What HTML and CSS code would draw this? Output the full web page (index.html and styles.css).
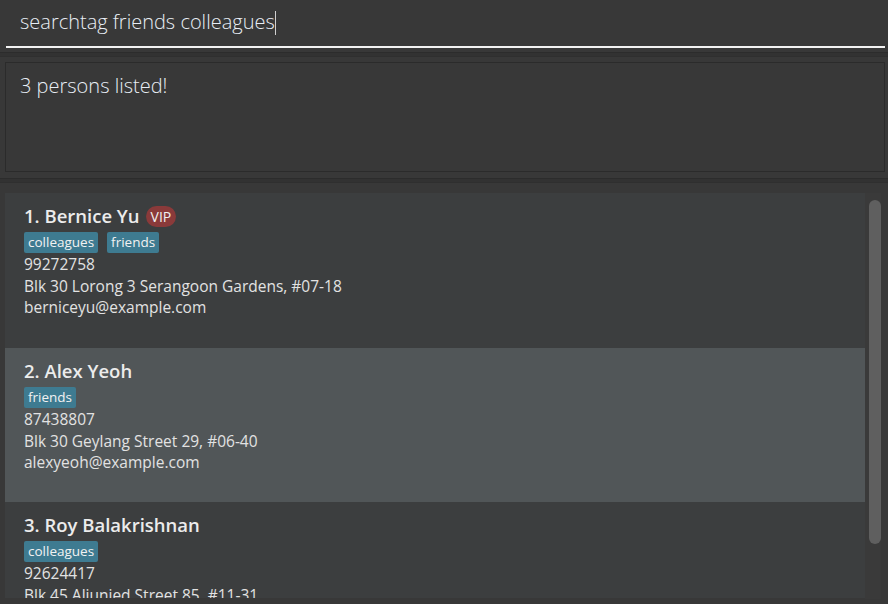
FILE: index.html
```html
<!DOCTYPE html>
<html>
<head>
<meta charset="utf-8">
<link rel="stylesheet" href="styles.css">
</head>
<body>
<div class="app">
  <div class="command-box">
    <div class="command-field"><span class="command-text">searchtag friends colleagues</span><span class="caret"></span></div>
  </div>
  <div class="divider"></div>
  <div class="result-pane">
    <div class="result-box">3 persons listed!</div>
  </div>
  <div class="divider"></div>
  <div class="list-pane">
    <div class="list">
      <div class="card">
        <div class="name">1. Bernice Yu <span class="vip">VIP</span></div>
        <div class="tags"><span class="tag">colleagues</span><span class="tag">friends</span></div>
        <div class="detail">99272758</div>
        <div class="detail">Blk 30 Lorong 3 Serangoon Gardens, #07-18</div>
        <div class="detail">berniceyu@example.com</div>
      </div>
      <div class="card odd">
        <div class="name">2. Alex Yeoh</div>
        <div class="tags"><span class="tag">friends</span></div>
        <div class="detail">87438807</div>
        <div class="detail">Blk 30 Geylang Street 29, #06-40</div>
        <div class="detail">alexyeoh@example.com</div>
      </div>
      <div class="card last">
        <div class="name">3. Roy Balakrishnan</div>
        <div class="tags"><span class="tag">colleagues</span></div>
        <div class="detail">92624417</div>
        <div class="detail">Blk 45 Aljunied Street 85, #11-31</div>
      </div>
    </div>
    <div class="scrollbar"><div class="thumb"></div></div>
  </div>
</div>
</body>
</html>
```
FILE: styles.css
```css
* { box-sizing: border-box; }
html, body { margin: 0; padding: 0; }
body {
  width: 888px;
  height: 604px;
  overflow: hidden;
  background: #383838;
  font-family: "Open Sans", "Noto Sans", sans-serif;
  color: #e6e6e6;
}
.app { display: flex; flex-direction: column; height: 604px; }
.command-box {
  height: 52px;
  padding: 0 3px 0 6px;
  background: #383838;
}
.command-field {
  height: 48px;
  border-bottom: 2px solid #f2f2f2;
  padding: 8px 0 0 14px;
  display: flex;
  align-items: flex-start;
  font-size: 20px;
  font-weight: 300;
  color: #e8eef5;
}
.command-text { line-height: 28px; }
.caret { width: 1px; height: 24px; background: #d0d0d0; margin-top: 3px; }
.divider { height: 5px; background: #323232; border-top: 1px solid #2c2c2c; border-bottom: 1px solid #2f2f2f; }
.result-pane { height: 121px; padding: 5px 3px 5px 5px; background: #383838; }
.result-box {
  height: 110px;
  border: 1px solid #2b2b2b;
  padding: 9px 14px;
  font-size: 20px;
  font-weight: 300;
  line-height: 28px;
  color: #e8eef5;
}
.list-pane {
  flex: 1;
  display: flex;
  padding: 10px 7px 0 5px;
  background: #383838;
  overflow: hidden;
}
.list { width: 860px; display: flex; flex-direction: column; }
.card {
  height: 155px;
  flex: none;
  background: #3c3e3f;
  padding: 9px 19px;
}
.card.odd { height: 154px; background: #515658; }
.card.last { height: 96px; overflow: hidden; }
.name {
  font-size: 18.5px;
  font-weight: 600;
  color: #ececec;
  line-height: 28px;
  display: flex;
  align-items: center;
}
.vip {
  display: inline-block;
  margin-left: 6px;
  background: #8a3a3a;
  color: #f0f0f0;
  font-size: 14px;
  font-weight: 400;
  line-height: 21px;
  padding: 0 5px;
  border-radius: 11px;
}
.tags { display: flex; gap: 9px; margin-top: 2px; margin-bottom: 1px; }
.tag {
  background: #3e7b91;
  color: #f2f2f2;
  font-size: 13.5px;
  line-height: 21px;
  padding: 0 4px;
  border-radius: 2px;
}
.detail { font-size: 15.5px; line-height: 21.5px; color: #e2e2e2; white-space: nowrap; }
.scrollbar { width: 16px; padding: 7px 2px 0 4px; background: #3a3a3a; height: 406px; }
.thumb { width: 12px; height: 344px; background: #5f5f5f; border-radius: 6px; }
```
